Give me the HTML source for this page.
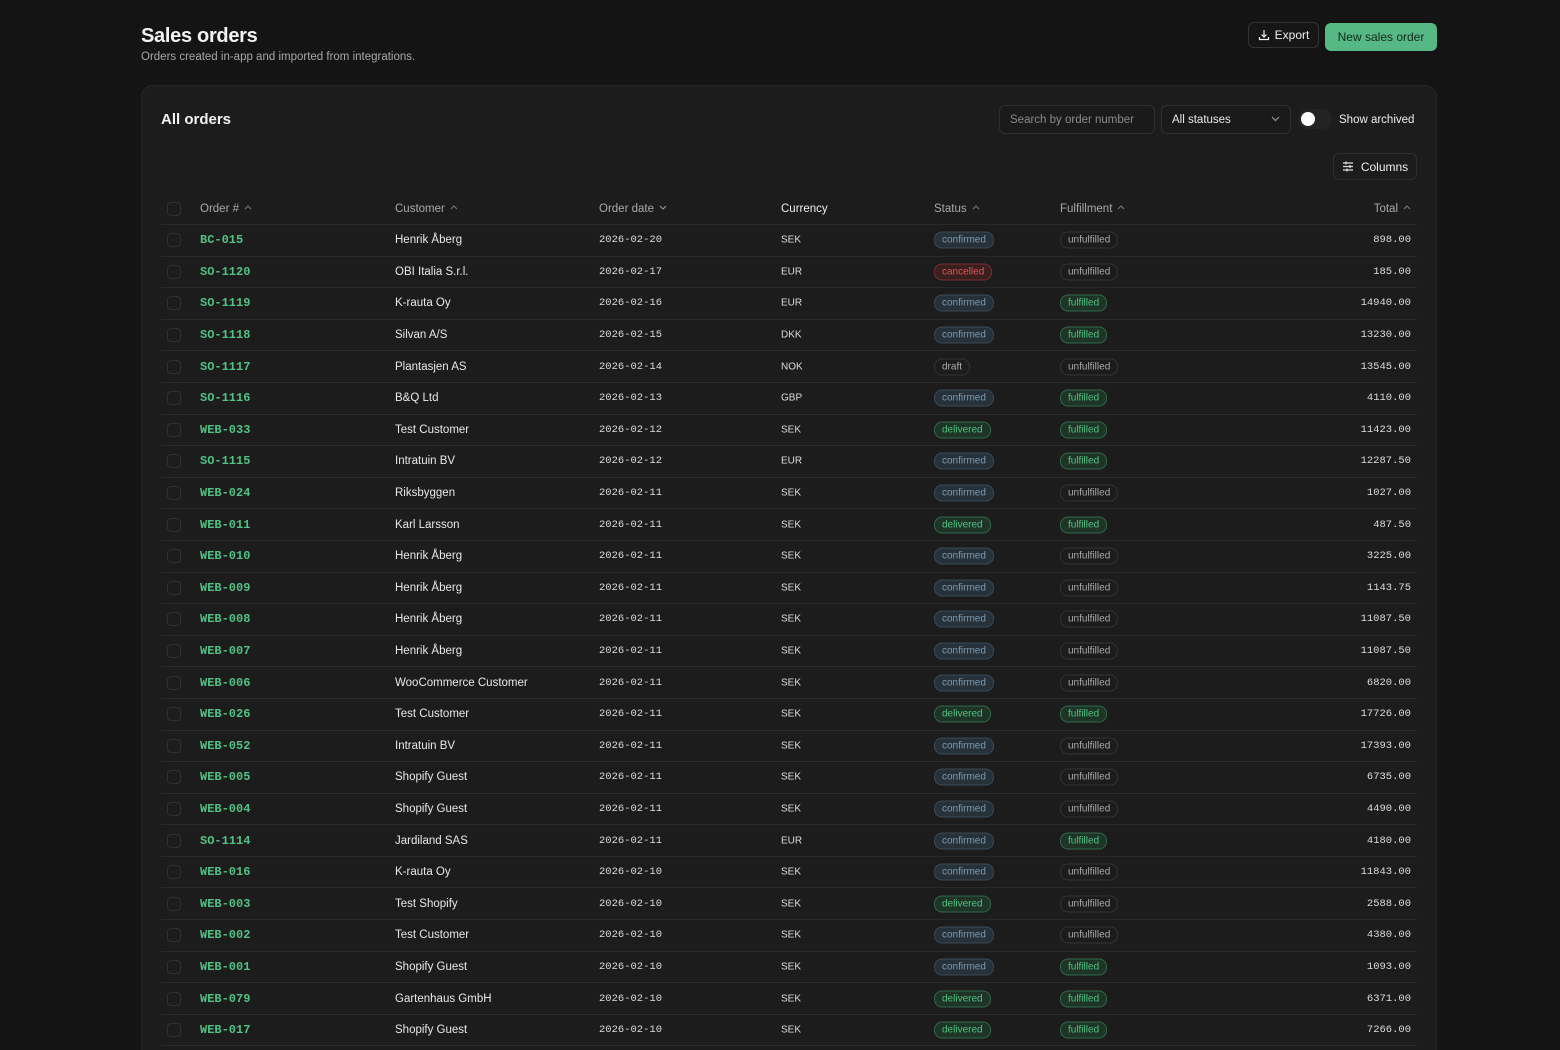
<!DOCTYPE html>
<html><head><meta charset="utf-8"><style>
*{box-sizing:border-box;margin:0;padding:0}
html,body{width:1560px;height:1050px;overflow:hidden}
body{background:#141414;font-family:"Liberation Sans",sans-serif;color:#e8e8e8;position:relative}
.title{position:absolute;left:141px;top:25px;font-size:20px;font-weight:bold;color:#f2f2f2;letter-spacing:-0.3px}
.sub{position:absolute;left:141px;top:51px;font-size:11.5px;color:#a8a8a8}
.btn{position:absolute;border-radius:6px;font-size:12px;display:flex;align-items:center;justify-content:center}
.export{left:1248px;top:22px;width:71px;height:26px;border:1px solid #333;background:#161616;color:#eee;gap:5px}
.new{left:1325px;top:23px;width:112px;height:28px;background:#56b884;color:#0f2a1b;font-weight:500}
.card{position:absolute;left:141px;top:85px;width:1296px;height:980px;background:#1c1c1c;border:1px solid #262626;border-radius:12px}
.ct{position:absolute;left:19px;top:25px;font-size:15px;font-weight:bold;color:#f2f2f2}
.search{position:absolute;left:857px;top:19px;width:156px;height:29px;border:1px solid #2e2e2e;border-radius:6px;background:#1a1a1a;font-size:11.5px;color:#8a8a8a;padding:8px 10px}
.sel{position:absolute;left:1019px;top:19px;width:130px;height:29px;border:1px solid #2e2e2e;border-radius:6px;background:#1a1a1a;font-size:11.5px;color:#e8e8e8;padding:8px 10px}
.sel svg{position:absolute;right:10px;top:10px}
.tog{position:absolute;left:1156px;top:23px;width:34px;height:20px;border-radius:10px;background:#232323}
.tog:after{content:"";position:absolute;left:3px;top:3px;width:14px;height:14px;border-radius:50%;background:#fff}
.arch{position:absolute;left:1197px;top:28px;font-size:11.5px;color:#eee}
.cols{position:absolute;left:1191px;top:67px;width:84px;height:27px;border:1px solid #2e2e2e;border-radius:6px;font-size:12px;color:#eee;display:flex;align-items:center;justify-content:center;gap:7px}
.tbl{position:absolute;left:19px;top:107px;width:1256px}
.row{position:relative;height:31.6px;border-bottom:1px solid #2a2a2a;font-size:11.5px}
.row>*{position:absolute;top:50%;transform:translateY(-50%);white-space:nowrap}
.hd{height:32px;color:#a8a8a8;font-size:11.5px}
.cb{left:6px;width:14px;height:14px;border:1px solid #303030;border-radius:4px}
.c1{left:39px}.c2{left:234px}.c3{left:438px}.c4{left:620px}.c5{left:773px}.c6{left:899px}.c7{right:6px}
.mono{font-family:"Liberation Mono",monospace}
.on{color:#4fc284;font-size:12px;font-weight:bold}
.dt{font-size:10.5px;color:#ddd}
.cur{font-size:10px;color:#ddd}
.tot{font-size:10.5px;color:#ddd}
.b{font-size:10px;padding:2px 7px;border-radius:8px;border:1px solid}
.cf{background:#26313a;border-color:#3a4a57;color:#7b9bb0}
.cn{background:#3a1f1f;border-color:#7a2e2e;color:#e05555}
.gr{background:#1d3427;border-color:#2f6848;color:#4fc284}
.gy{background:#1c1c1c;border-color:#333;color:#aaa}
.ar{display:inline-block;width:8px;height:5px;margin-left:5px;vertical-align:2px}
</style></head><body>
<svg width="0" height="0" style="position:absolute"><defs>
<symbol id="up" viewBox="0 0 8 5"><path d="M1 4l3-3 3 3" fill="none" stroke="#777" stroke-width="1.1"/></symbol>
<symbol id="dn" viewBox="0 0 8 5"><path d="M1 1l3 3 3-3" fill="none" stroke="#999" stroke-width="1.1"/></symbol>
</defs></svg>
<div class="title">Sales orders</div>
<div class="sub">Orders created in-app and imported from integrations.</div>
<div class="btn export"><svg width="12" height="12" viewBox="0 0 12 12" fill="none" stroke="#eee" stroke-width="1.2"><path d="M6 1v7M3.5 5.5L6 8l2.5-2.5M1.5 8v2.5h9V8"/></svg>Export</div>
<div class="btn new">New sales order</div>
<div class="card">
<div class="ct">All orders</div>
<div class="search">Search by order number</div>
<div class="sel">All statuses<svg width="9" height="6" viewBox="0 0 9 6" fill="none" stroke="#999" stroke-width="1.2"><path d="M1 1l3.5 3.5L8 1"/></svg></div>
<div class="tog"></div>
<div class="arch">Show archived</div>
<div class="cols"><svg width="12" height="11" viewBox="0 0 12 11" fill="none" stroke="#ddd" stroke-width="1.2"><path d="M1 2h10M1 5.5h10M1 9h10M4 0.5v3M8 4v3M5 7.5v3"/></svg>Columns</div>
<div class="tbl">
<div class="row hd"><span class="cb"></span><span class="c1">Order #<svg class="ar"><use href="#up"/></svg></span><span class="c2">Customer<svg class="ar"><use href="#up"/></svg></span><span class="c3">Order date<svg class="ar"><use href="#dn"/></svg></span><span class="c4" style="color:#eee">Currency</span><span class="c5">Status<svg class="ar"><use href="#up"/></svg></span><span class="c6">Fulfillment<svg class="ar"><use href="#up"/></svg></span><span class="c7">Total<svg class="ar"><use href="#up"/></svg></span></div>
<div class="row"><span class="cb"></span><span class="c1 mono on">BC-015</span><span class="c2">Henrik Åberg</span><span class="c3 mono dt">2026-02-20</span><span class="c4 cur">SEK</span><span class="c5 b cf">confirmed</span><span class="c6 b gy">unfulfilled</span><span class="c7 mono tot">898.00</span></div>
<div class="row"><span class="cb"></span><span class="c1 mono on">SO-1120</span><span class="c2">OBI Italia S.r.l.</span><span class="c3 mono dt">2026-02-17</span><span class="c4 cur">EUR</span><span class="c5 b cn">cancelled</span><span class="c6 b gy">unfulfilled</span><span class="c7 mono tot">185.00</span></div>
<div class="row"><span class="cb"></span><span class="c1 mono on">SO-1119</span><span class="c2">K-rauta Oy</span><span class="c3 mono dt">2026-02-16</span><span class="c4 cur">EUR</span><span class="c5 b cf">confirmed</span><span class="c6 b gr">fulfilled</span><span class="c7 mono tot">14940.00</span></div>
<div class="row"><span class="cb"></span><span class="c1 mono on">SO-1118</span><span class="c2">Silvan A/S</span><span class="c3 mono dt">2026-02-15</span><span class="c4 cur">DKK</span><span class="c5 b cf">confirmed</span><span class="c6 b gr">fulfilled</span><span class="c7 mono tot">13230.00</span></div>
<div class="row"><span class="cb"></span><span class="c1 mono on">SO-1117</span><span class="c2">Plantasjen AS</span><span class="c3 mono dt">2026-02-14</span><span class="c4 cur">NOK</span><span class="c5 b gy">draft</span><span class="c6 b gy">unfulfilled</span><span class="c7 mono tot">13545.00</span></div>
<div class="row"><span class="cb"></span><span class="c1 mono on">SO-1116</span><span class="c2">B&amp;Q Ltd</span><span class="c3 mono dt">2026-02-13</span><span class="c4 cur">GBP</span><span class="c5 b cf">confirmed</span><span class="c6 b gr">fulfilled</span><span class="c7 mono tot">4110.00</span></div>
<div class="row"><span class="cb"></span><span class="c1 mono on">WEB-033</span><span class="c2">Test Customer</span><span class="c3 mono dt">2026-02-12</span><span class="c4 cur">SEK</span><span class="c5 b gr">delivered</span><span class="c6 b gr">fulfilled</span><span class="c7 mono tot">11423.00</span></div>
<div class="row"><span class="cb"></span><span class="c1 mono on">SO-1115</span><span class="c2">Intratuin BV</span><span class="c3 mono dt">2026-02-12</span><span class="c4 cur">EUR</span><span class="c5 b cf">confirmed</span><span class="c6 b gr">fulfilled</span><span class="c7 mono tot">12287.50</span></div>
<div class="row"><span class="cb"></span><span class="c1 mono on">WEB-024</span><span class="c2">Riksbyggen</span><span class="c3 mono dt">2026-02-11</span><span class="c4 cur">SEK</span><span class="c5 b cf">confirmed</span><span class="c6 b gy">unfulfilled</span><span class="c7 mono tot">1027.00</span></div>
<div class="row"><span class="cb"></span><span class="c1 mono on">WEB-011</span><span class="c2">Karl Larsson</span><span class="c3 mono dt">2026-02-11</span><span class="c4 cur">SEK</span><span class="c5 b gr">delivered</span><span class="c6 b gr">fulfilled</span><span class="c7 mono tot">487.50</span></div>
<div class="row"><span class="cb"></span><span class="c1 mono on">WEB-010</span><span class="c2">Henrik Åberg</span><span class="c3 mono dt">2026-02-11</span><span class="c4 cur">SEK</span><span class="c5 b cf">confirmed</span><span class="c6 b gy">unfulfilled</span><span class="c7 mono tot">3225.00</span></div>
<div class="row"><span class="cb"></span><span class="c1 mono on">WEB-009</span><span class="c2">Henrik Åberg</span><span class="c3 mono dt">2026-02-11</span><span class="c4 cur">SEK</span><span class="c5 b cf">confirmed</span><span class="c6 b gy">unfulfilled</span><span class="c7 mono tot">1143.75</span></div>
<div class="row"><span class="cb"></span><span class="c1 mono on">WEB-008</span><span class="c2">Henrik Åberg</span><span class="c3 mono dt">2026-02-11</span><span class="c4 cur">SEK</span><span class="c5 b cf">confirmed</span><span class="c6 b gy">unfulfilled</span><span class="c7 mono tot">11087.50</span></div>
<div class="row"><span class="cb"></span><span class="c1 mono on">WEB-007</span><span class="c2">Henrik Åberg</span><span class="c3 mono dt">2026-02-11</span><span class="c4 cur">SEK</span><span class="c5 b cf">confirmed</span><span class="c6 b gy">unfulfilled</span><span class="c7 mono tot">11087.50</span></div>
<div class="row"><span class="cb"></span><span class="c1 mono on">WEB-006</span><span class="c2">WooCommerce Customer</span><span class="c3 mono dt">2026-02-11</span><span class="c4 cur">SEK</span><span class="c5 b cf">confirmed</span><span class="c6 b gy">unfulfilled</span><span class="c7 mono tot">6820.00</span></div>
<div class="row"><span class="cb"></span><span class="c1 mono on">WEB-026</span><span class="c2">Test Customer</span><span class="c3 mono dt">2026-02-11</span><span class="c4 cur">SEK</span><span class="c5 b gr">delivered</span><span class="c6 b gr">fulfilled</span><span class="c7 mono tot">17726.00</span></div>
<div class="row"><span class="cb"></span><span class="c1 mono on">WEB-052</span><span class="c2">Intratuin BV</span><span class="c3 mono dt">2026-02-11</span><span class="c4 cur">SEK</span><span class="c5 b cf">confirmed</span><span class="c6 b gy">unfulfilled</span><span class="c7 mono tot">17393.00</span></div>
<div class="row"><span class="cb"></span><span class="c1 mono on">WEB-005</span><span class="c2">Shopify Guest</span><span class="c3 mono dt">2026-02-11</span><span class="c4 cur">SEK</span><span class="c5 b cf">confirmed</span><span class="c6 b gy">unfulfilled</span><span class="c7 mono tot">6735.00</span></div>
<div class="row"><span class="cb"></span><span class="c1 mono on">WEB-004</span><span class="c2">Shopify Guest</span><span class="c3 mono dt">2026-02-11</span><span class="c4 cur">SEK</span><span class="c5 b cf">confirmed</span><span class="c6 b gy">unfulfilled</span><span class="c7 mono tot">4490.00</span></div>
<div class="row"><span class="cb"></span><span class="c1 mono on">SO-1114</span><span class="c2">Jardiland SAS</span><span class="c3 mono dt">2026-02-11</span><span class="c4 cur">EUR</span><span class="c5 b cf">confirmed</span><span class="c6 b gr">fulfilled</span><span class="c7 mono tot">4180.00</span></div>
<div class="row"><span class="cb"></span><span class="c1 mono on">WEB-016</span><span class="c2">K-rauta Oy</span><span class="c3 mono dt">2026-02-10</span><span class="c4 cur">SEK</span><span class="c5 b cf">confirmed</span><span class="c6 b gy">unfulfilled</span><span class="c7 mono tot">11843.00</span></div>
<div class="row"><span class="cb"></span><span class="c1 mono on">WEB-003</span><span class="c2">Test Shopify</span><span class="c3 mono dt">2026-02-10</span><span class="c4 cur">SEK</span><span class="c5 b gr">delivered</span><span class="c6 b gy">unfulfilled</span><span class="c7 mono tot">2588.00</span></div>
<div class="row"><span class="cb"></span><span class="c1 mono on">WEB-002</span><span class="c2">Test Customer</span><span class="c3 mono dt">2026-02-10</span><span class="c4 cur">SEK</span><span class="c5 b cf">confirmed</span><span class="c6 b gy">unfulfilled</span><span class="c7 mono tot">4380.00</span></div>
<div class="row"><span class="cb"></span><span class="c1 mono on">WEB-001</span><span class="c2">Shopify Guest</span><span class="c3 mono dt">2026-02-10</span><span class="c4 cur">SEK</span><span class="c5 b cf">confirmed</span><span class="c6 b gr">fulfilled</span><span class="c7 mono tot">1093.00</span></div>
<div class="row"><span class="cb"></span><span class="c1 mono on">WEB-079</span><span class="c2">Gartenhaus GmbH</span><span class="c3 mono dt">2026-02-10</span><span class="c4 cur">SEK</span><span class="c5 b gr">delivered</span><span class="c6 b gr">fulfilled</span><span class="c7 mono tot">6371.00</span></div>
<div class="row"><span class="cb"></span><span class="c1 mono on">WEB-017</span><span class="c2">Shopify Guest</span><span class="c3 mono dt">2026-02-10</span><span class="c4 cur">SEK</span><span class="c5 b gr">delivered</span><span class="c6 b gr">fulfilled</span><span class="c7 mono tot">7266.00</span></div>
</div>
</div>
</body></html>
